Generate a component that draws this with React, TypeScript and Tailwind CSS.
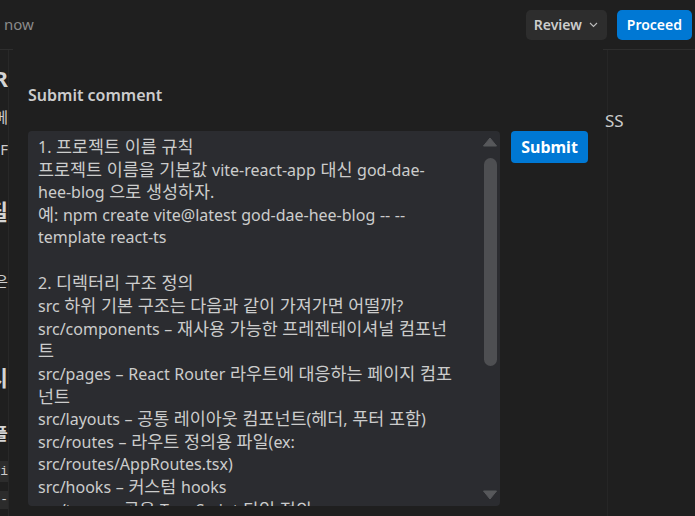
import React from "react";

const lines = [
  "1. 프로젝트 이름 규칙",
  "프로젝트 이름을 기본값 vite-react-app 대신 god-dae-",
  "hee-blog 으로 생성하자.",
  "예: npm create vite@latest god-dae-hee-blog -- --",
  "template react-ts",
  "",
  "2. 디렉터리 구조 정의",
  "src 하위 기본 구조는 다음과 같이 가져가면 어떨까?",
  "src/components – 재사용 가능한 프레젠테이셔널 컴포넌",
  "트",
  "src/pages – React Router 라우트에 대응하는 페이지 컴포",
  "넌트",
  "src/layouts – 공통 레이아웃 컴포넌트(헤더, 푸터 포함)",
  "src/routes – 라우트 정의용 파일(ex:",
  "src/routes/AppRoutes.tsx)",
  "src/hooks – 커스텀 hooks",
  "src/types – 공용 TypeScript 타입 정의",
];

const font = {
  fontFamily: '"Noto Sans", "Noto Sans CJK KR", sans-serif',
};

function Mixed({ text }: { text: string }) {
  const parts = text.split(/([\uAC00-\uD7A3]+)/);
  return (
    <>
      {parts.map((p, i) =>
        /[\uAC00-\uD7A3]/.test(p) ? (
          <span key={i} className="text-[17.4px]">
            {p}
          </span>
        ) : (
          <span key={i}>{p}</span>
        )
      )}
    </>
  );
}

function Clip({ children, className }: { children: React.ReactNode; className?: string }) {
  return (
    <div className={"flex justify-end overflow-hidden whitespace-nowrap " + (className ?? "")}>
      <span>{children}</span>
    </div>
  );
}

export default function App() {
  return (
    <div
      className="relative w-[695px] h-[516px] overflow-hidden bg-[#1f1f1f] text-[#cccccc]"
      style={font}
    >
      {/* top bar */}
      <div className="flex h-[50px] items-center border-b border-[#2e2e2e] pl-[4px] pr-[3px]">
        <span className="text-[15px] text-[#8a8a8a]">now</span>
        <div className="flex-1" />
        <button className="flex h-[30px] items-center gap-[7px] rounded-[5px] bg-[#2d2d2d] pl-[8px] pr-[9px] text-[14px] font-semibold text-[#cccccc]">
          Review
          <svg width="9" height="6" viewBox="0 0 9 6" fill="none">
            <path d="M1 1l3.5 3.5L8 1" stroke="#bdbdbd" strokeWidth="1.1" />
          </svg>
        </button>
        <button className="ml-[10px] flex h-[30px] items-center rounded-[5px] bg-[#0078d4] px-[10px] text-[14px] font-semibold text-white">
          Proceed
        </button>
      </div>

      {/* main behind */}
      <div className="flex h-[466px]">
        <div className="flex w-[9px] flex-col border-r border-[#282828]">
          <Clip className="mt-[14px] text-[22px] font-bold leading-[28px] text-[#d4d4d4]">R</Clip>
          <Clip className="mt-[15px] text-[15px] leading-[20px]">문서 구조 개요 베</Clip>
          <Clip className="mt-[12px] text-[15px] leading-[20px]">README F</Clip>
          <Clip className="mt-[38px] text-[22px] font-bold leading-[28px] text-[#d4d4d4]">필</Clip>
          <Clip className="mt-[46px] text-[15px] leading-[20px]">은</Clip>
          <Clip className="mt-[72px] text-[22px] font-bold leading-[28px] text-[#d4d4d4]">시</Clip>
          <Clip className="mt-[31px] text-[17px] font-bold leading-[24px] text-[#d4d4d4]">플</Clip>
          <Clip className="mt-[15px] h-[21px] bg-[#2c2c2c] text-[13px] leading-[21px] font-mono">npm create vi</Clip>
          <Clip className="mt-[9px] h-[18px] bg-[#2c2c2c] text-[13px] leading-[18px] font-mono">-</Clip>
        </div>
        <div className="flex-1" />
        <div className="w-[88px] border-l border-[#262626] pt-[59px] text-[17px] leading-[24px] text-[#cccccc]">
          <span className="-ml-[3px]">SS</span>
        </div>
      </div>

      {/* popup */}
      <div className="absolute left-[13px] top-[49px] bottom-0 w-[590px] bg-[#1f1f1f] pl-[15px]">
        <div className="mt-[34px] text-[16px] font-semibold leading-[24px] text-[#cccccc]">
          Submit comment
        </div>
        <div className="mt-[24px] flex items-start gap-[11px]">
          <div className="relative h-[375px] w-[472px] overflow-hidden rounded-[4px] bg-[#2b2c30]">
            <div className="pl-[10px] pt-[4px] text-[16px] leading-[22.7px] text-[#cccccc] whitespace-pre [word-spacing:0.5px]">
              {lines.map((l, i) => (
                <div key={i} className="h-[22.7px]">
                  <Mixed text={l} />
                </div>
              ))}
            </div>
            {/* scrollbar */}
            <div className="absolute right-[3px] top-0 bottom-0 flex w-[14px] flex-col items-center">
              <svg width="14" height="10" viewBox="0 0 14 10" className="mt-[6px]">
                <path d="M7 1L13.5 9H0.5z" fill="#57585b" stroke="#57585b" strokeLinejoin="round" strokeWidth="1" />
              </svg>
              <div className="mt-[11px] h-[208px] w-[13px] rounded-full bg-[#4e4f52]" />
              <div className="flex-1" />
              <svg width="14" height="10" viewBox="0 0 14 10" className="mb-[6px]">
                <path d="M7 9L13.5 1H0.5z" fill="#57585b" stroke="#57585b" strokeLinejoin="round" strokeWidth="1" />
              </svg>
            </div>
          </div>
          <button className="flex h-[32px] w-[77px] items-center justify-center rounded-[4px] bg-[#0078d4] text-[16px] font-bold text-white">
            Submit
          </button>
        </div>
      </div>
    </div>
  );
}
